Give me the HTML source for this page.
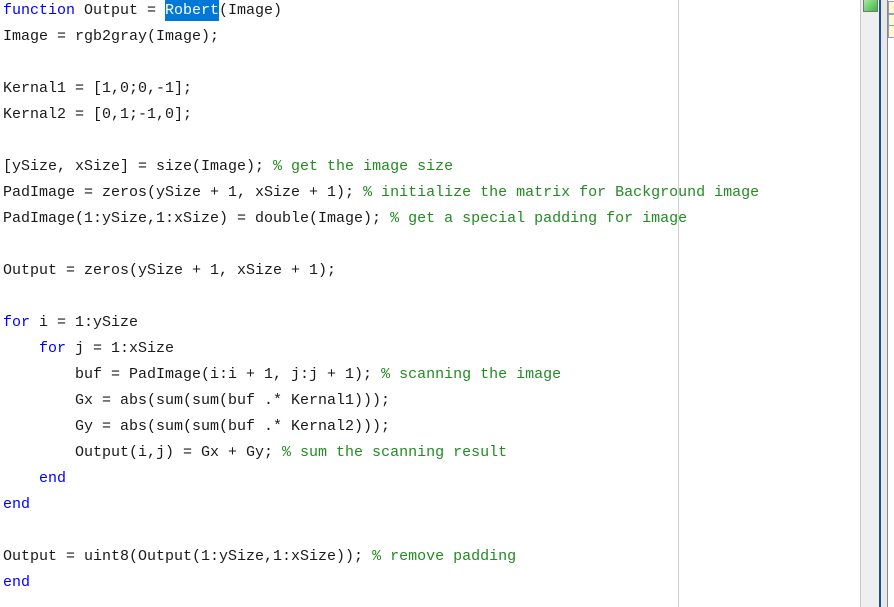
<!DOCTYPE html>
<html><head><meta charset="utf-8"><style>
html,body{margin:0;padding:0;width:894px;height:607px;overflow:hidden;background:#fff;position:relative}
pre{position:absolute;left:3px;top:-2px;margin:0;font-family:"Liberation Mono","Noto Sans CJK SC",monospace;font-size:15px;line-height:26px;color:#1a1a1a}
.k{color:#0000ff}.c{color:#228b22}.h{background:#0078d7;color:#fff;padding:2px 0}
.gut{position:absolute;left:678px;top:0;width:1px;height:607px;background:#cfcfcf}
.rp{position:absolute;left:860px;top:0;width:19px;height:607px;background:#efefef;border-left:1px solid #c8c8c8}
.gr{position:absolute;left:863px;top:0;width:13px;height:11px;background:linear-gradient(135deg,#a8e8a8,#3cb83c);border:1px solid #777;border-top:none}
.bl{position:absolute;left:879px;top:0;width:2px;height:607px;background:#1c4f8f}
.g2{position:absolute;left:881px;top:0;width:6px;height:607px;background:#e8e8e8}
.dl{position:absolute;left:887px;top:0;width:1px;height:607px;background:#888}
.ic{position:absolute;left:888px;width:6px;height:11px;background:#fff7d0;border:1px solid #8aa0c0;border-right:none}
</style></head><body>
<pre><span class="k">function</span> Output = <span class="h">Robert</span>(Image)
Image = rgb2gray(Image);

Kernal1 = [1,0;0,-1];
Kernal2 = [0,1;-1,0];

[ySize, xSize] = size(Image); <span class="c">% get the image size</span>
PadImage = zeros(ySize + 1, xSize + 1); <span class="c">% initialize the matrix for Background image</span>
PadImage(1:ySize,1:xSize) = double(Image); <span class="c">% get a special padding for image</span>

Output = zeros(ySize + 1, xSize + 1);

<span class="k">for</span> i = 1:ySize
    <span class="k">for</span> j = 1:xSize
        buf = PadImage(i:i + 1, j:j + 1); <span class="c">% scanning the image</span>
        Gx = abs(sum(sum(buf .* Kernal1)));
        Gy = abs(sum(sum(buf .* Kernal2)));
        Output(i,j) = Gx + Gy; <span class="c">% sum the scanning result</span>
    <span class="k">end</span>
<span class="k">end</span>

Output = uint8(Output(1:ySize,1:xSize)); <span class="c">% remove padding</span>
<span class="k">end</span></pre>
<div class="gut"></div>
<div class="rp"></div><div class="gr"></div>
<div class="bl"></div><div class="g2"></div><div class="dl"></div>
<div class="ic" style="top:1px"></div><div class="ic" style="top:14px"></div><div class="ic" style="top:25px"></div>
</body></html>
